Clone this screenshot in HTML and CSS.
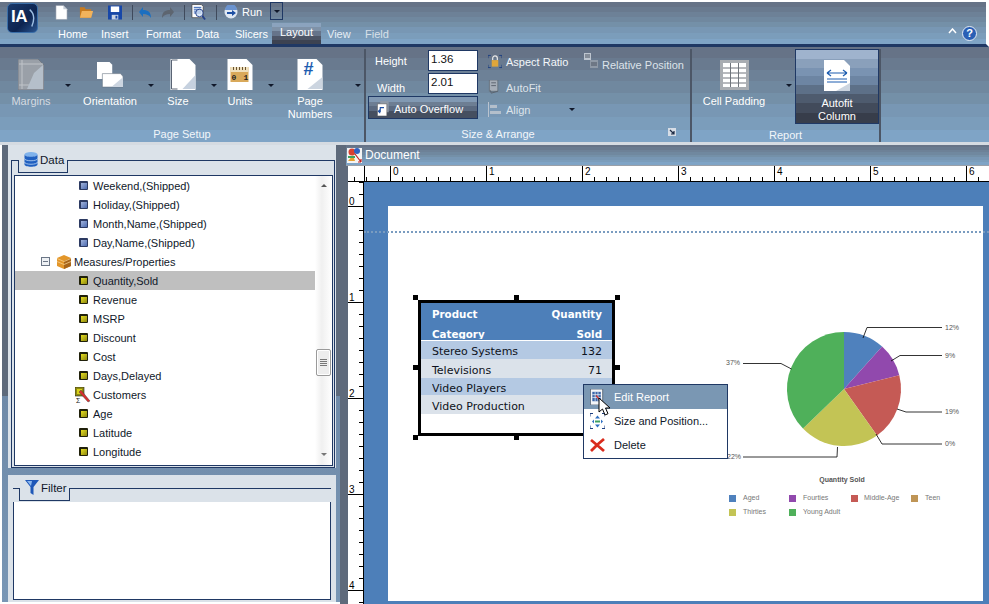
FILE: index.html
```html
<!DOCTYPE html>
<html lang="en">
<head>
    <meta charset="UTF-8">
    <title>InfoAssist</title>
    <link rel="stylesheet" href="styles.css">
</head>
<body>
    <header class="titlebar">
        <div class="logo">IA<svg class="logo-swoosh" viewBox="0 0 10 26"><path d="M1 1c6 5 8 12 3 24" fill="none" stroke="#9fc0e4" stroke-width="2"/></svg></div>
        <div class="titlebar-main">
            <div class="quick">
                <svg class="qi qi-new" viewBox="0 0 14 15"><path d="M1 0h8l4 4v11H1z" fill="#fff" stroke="#8d97a5" stroke-width=".6"/><path d="M9 0v4h4z" fill="#c4ccd6"/></svg>
                <svg class="qi qi-open" viewBox="0 0 16 14"><path d="M1 2h5l1 2h6v9H1z" fill="#c77a1e"/><path d="M3 6h12l-2 7H1z" fill="#f2b35c"/></svg>
                <svg class="qi qi-save" viewBox="0 0 15 15"><path d="M0 0h15v15H0z" fill="#1747a8"/><path d="M3 1h9v6H3z" fill="#fff"/><path d="M4 10h7v5H4z" fill="#c9d3e2"/><path d="M8 11h2v3H8z" fill="#1747a8"/></svg>
                <span class="qsep"></span>
                <svg class="qi qi-undo" viewBox="0 0 12 11"><path d="M4 0v3c5 0 8 2 8 8-2-3-4-4-8-4v3L0 5z" fill="#1c6fc0"/></svg>
                <svg class="qi qi-redo" viewBox="0 0 12 11"><path d="M8 0v3C3 3 0 5 0 11c2-3 4-4 8-4v3l4-5z" fill="#5d6570"/></svg>
                <span class="qsep"></span>
                <svg class="qi qi-preview" viewBox="0 0 16 17"><path d="M1 0h10l2 2v12H1z" fill="#fff" stroke="#333" stroke-width=".7"/><path d="M3 3h8M3 5h8M3 7h8M3 9h8" stroke="#2458b0"/><circle cx="9" cy="9" r="4" fill="#cfe0f5" fill-opacity=".7" stroke="#24408a"/><path d="M12 12l3 4" stroke="#24408a" stroke-width="2"/></svg>
                <span class="qsep"></span>
                <svg class="qi qi-run" viewBox="0 0 14 14"><circle cx="7" cy="7" r="6.500" fill="#dfe8f3"/><path d="M1 5a6 6 0 0 1 12 0z" fill="#6a93d0"/><path d="M3 7h5V5l4 3-4 3V9H3z" fill="#1d4fa3"/></svg>
                <span class="run-label">Run</span>
                <span class="run-drop"><i class="caret"></i></span>
            </div>
            <nav class="tabs">
                <span class="tab tab-home">Home</span>
                <span class="tab tab-insert">Insert</span>
                <span class="tab tab-format">Format</span>
                <span class="tab tab-data">Data</span>
                <span class="tab tab-slicers">Slicers</span>
                <span class="tab tab-layout">Layout</span>
                <span class="tab tab-view">View</span>
                <span class="tab tab-field">Field</span>
                <svg class="collapse" viewBox="0 0 9 6"><path d="M1 5l3.500-4L8 5" fill="none" stroke="#fff" stroke-width="1.500"/></svg>
                <span class="help">?</span>
            </nav>
        </div>
    </header>

    <section class="ribbon">
        <div class="group group-page">
            <div class="page-buttons">
                <div class="big">
                    <svg class="big-icon dim" viewBox="0 0 26 31"><path d="M0 0h20l6 6v25H0z" fill="#9aa0a8" stroke="#6f757d" stroke-width=".8"/><path d="M4 1v29M1 5h24M1 26h24" stroke="#c0c4c9"/><path d="M16 14l9-8v24H9z" fill="#b5bfca"/></svg>
                    <span class="lbl lbl-dim">Margins</span>
                </div>
                <i class="caret"></i>
                <div class="big">
                    <svg class="big-icon" viewBox="0 0 29 28"><path d="M0 0h14l3 3v16H0z" fill="#fff"/><path d="M6 13h20l3 3v12H6z" fill="#fff" stroke="#5e6a7a" stroke-width=".6"/><path d="M16 28l13-11v11z" fill="#ccd5e0"/></svg>
                    <span class="lbl">Orientation</span>
                </div>
                <i class="caret"></i>
                <div class="big big-size">
                    <svg class="big-icon" viewBox="0 0 25 31"><path d="M0 0h19l6 6v25H0z" fill="#fff"/><path d="M1 1v29h6M1 1h6" fill="none" stroke="#5a6474"/><path d="M12 30l13-14v14z" fill="#c6d1df"/></svg>
                    <span class="lbl">Size</span>
                </div>
                <i class="caret"></i>
                <div class="big">
                    <svg class="big-icon" viewBox="0 0 25 31"><path d="M0 0h19l6 6v25H0z" fill="#fff"/><path d="M3 8h18v15H3z" fill="#d9a95a"/><path d="M3 8h18v5H3z" fill="#efe0bd"/><path d="M6 8v3M9 8v3M12 8v3M15 8v3M18 8v3" stroke="#6a5330"/><text x="4" y="21" class="unit-num">0</text><text x="16" y="21" class="unit-num">1</text></svg>
                    <span class="lbl">Units</span>
                </div>
                <i class="caret"></i>
                <div class="big">
                    <svg class="big-icon" viewBox="0 0 25 31"><path d="M0 0h19l6 6v25H0z" fill="#fff"/><text x="6" y="16" class="hash">#</text><path d="M10 30l15-12v12z" fill="#ccd5e0"/></svg>
                    <span class="lbl">Page<br>Numbers</span>
                </div>
                <i class="caret caret-last"></i>
            </div>
            <div class="group-name">Page Setup</div>
        </div>

        <div class="group group-size">
            <div class="size-body">
                <div class="size-fields">
                    <label class="field-row">
                        <span class="field-name">Height</span>
                        <span class="field-box">1.36</span>
                    </label>
                    <label class="field-row">
                        <span class="field-name field-name-width">Width</span>
                        <span class="field-box">2.01</span>
                    </label>
                    <div class="overflow-btn">
                        <svg class="small-icon" viewBox="0 0 14 16"><path d="M3 0h9v12H3z" fill="#8e9aa9"/><path d="M0 3h10v13H0z" fill="#fff" stroke="#555" stroke-width=".6"/><path d="M7 7H3v4H1.500M3 13l-2-2 2-2" fill="none" stroke="#1d4fa3" stroke-width="1.200"/></svg>
                        Auto Overflow
                    </div>
                </div>
                <div class="size-tools">
                    <div class="tool tool-aspect"><svg class="small-icon" viewBox="0 0 15 15"><path d="M0 4V1h3M12 1h3v3M0 11v3h3M12 14h3v-3" fill="none" stroke="#1d3f80"/><path d="M4 6h7v7H4z" fill="#e0a63a"/><path d="M5 6V4a2.500 2.500 0 0 1 5 0v2" fill="none" stroke="#e8e8e8" stroke-width="1.300"/></svg>Aspect Ratio</div>
                    <div class="tool tool-dim tool-autofit"><svg class="small-icon" viewBox="0 0 14 16"><path d="M1 0h9v12H1z" fill="#a6aeb8" stroke="#59616c" stroke-width=".7"/><path d="M10 12L3 14l-1-3" fill="none" stroke="#59616c"/><path d="M3 3h5M3 6h5" stroke="#59616c"/></svg>AutoFit</div>
                    <div class="tool tool-dim tool-align"><svg class="small-icon" viewBox="0 0 14 15"><path d="M.5 0v15" stroke="#b9c3cf"/><path d="M2 3h7v3H2zM2 9h11v3H2z" fill="#b4bfcb"/></svg>Align<i class="caret caret-align"></i></div>
                </div>
                <div class="tool tool-dim tool-relative"><svg class="small-icon icon-relative" viewBox="0 0 14 15"><path d="M0 0h7v7H0z" fill="#bdc5cf"/><path d="M6 7h8v8H6z" fill="#8f99a6"/><path d="M1 2h5M1 4h5M7 10h6M7 12h6" stroke="#4c5562"/></svg>Relative Position</div>
            </div>
            <div class="group-name group-name-size">
                Size &amp; Arrange
                <svg class="launcher" viewBox="0 0 8 8"><path d="M0 0h8v8H0z" fill="#d6dde6"/><path d="M2 2l4 4M6 3v3H3" fill="none" stroke="#1d2b45" stroke-width="1.200"/></svg>
            </div>
        </div>

        <div class="group group-report">
            <div class="report-body">
                <div class="big big-padding">
                    <svg class="big-icon" viewBox="0 0 29 30"><path d="M0 0h29v30H0z" fill="#a9adb2"/><path d="M3 3h23v24H3z" fill="#fff"/><path d="M3 8h23M3 13h23M3 18h23M3 23h23" stroke="#70757c"/><path d="M10.500 3v24M18.500 3v24" stroke="#70757c"/></svg>
                    <span class="lbl">Cell Padding</span>
                </div>
                <i class="caret caret-padding"></i>
                <div class="autofit-btn">
                    <svg class="big-icon" viewBox="0 0 26 31"><path d="M0 0h20l6 6v25H0z" fill="#fff"/><path d="M3 13h20M3 13l4-3M3 13l4 3M23 13l-4-3M23 13l-4 3" fill="none" stroke="#1d5db0" stroke-width="1.200"/><path d="M3 19h20M3 22h20" stroke="#1d5db0"/><path d="M12 31l14-8v8z" fill="#ccd5e0"/></svg>
                    <span class="lbl">Autofit<br>Column</span>
                </div>
            </div>
            <div class="group-name group-name-report">Report</div>
        </div>
    </section>

    <main class="workspace">
        <aside class="sidebar">
            <section class="panel panel-data">
                <div class="panel-head">
                    <div class="panel-tab">
                        <svg class="tab-icon" viewBox="0 0 14 15"><ellipse cx="7" cy="2.500" rx="6.500" ry="2.500" fill="#7fb2ec"/><path d="M.5 2.500v10c0 3 13 3 13 0v-10c0 3-13 3-13 0z" fill="#1f5fc0"/><path d="M.5 6.500c0 3 13 3 13 0M.5 10c0 3 13 3 13 0" fill="none" stroke="#bcd5f2" stroke-width=".8"/></svg>
                        <span class="tab-text">Data</span>
                    </div>
                </div>
                <div class="tree-box">
                    <ul class="tree">
                        <li class="row"><i class="fld fld-dim"></i>Weekend,(Shipped)</li>
                        <li class="row"><i class="fld fld-dim"></i>Holiday,(Shipped)</li>
                        <li class="row"><i class="fld fld-dim"></i>Month,Name,(Shipped)</li>
                        <li class="row"><i class="fld fld-dim"></i>Day,Name,(Shipped)</li>
                        <li class="row row-folder">
                            <span class="minus"></span>
                            <svg class="cube" viewBox="0 0 14 14"><path d="M7 0l7 3v8l-7 3-7-3V3z" fill="#e3962a"/><path d="M7 6l7-3v8l-7 3z" fill="#a8651a"/><path d="M0 6.500l7 3 7-3M0 3.500l7 3 7-3" fill="none" stroke="#f6cf8b" stroke-width=".8"/></svg>
                            Measures/Properties
                        </li>
                        <li class="row row-selected"><i class="fld"></i>Quantity,Sold</li>
                        <li class="row"><i class="fld"></i>Revenue</li>
                        <li class="row"><i class="fld"></i>MSRP</li>
                        <li class="row"><i class="fld"></i>Discount</li>
                        <li class="row"><i class="fld"></i>Cost</li>
                        <li class="row"><i class="fld"></i>Days,Delayed</li>
                        <li class="row row-calc">
                            <svg class="calc-icon" viewBox="0 0 16 16"><path d="M0 0h9v9H0z" fill="#8f8a10" stroke="#222" stroke-width=".6"/><path d="M2 2h5v5H2z" fill="#d8d21a"/><path d="M6 3l9 11-2 1L4 5z" fill="#d83030" stroke="#333" stroke-width=".4"/><text x="1" y="15.500" class="sigma">Σ</text></svg>
                            Customers
                        </li>
                        <li class="row"><i class="fld"></i>Age</li>
                        <li class="row"><i class="fld"></i>Latitude</li>
                        <li class="row"><i class="fld"></i>Longitude</li>
                    </ul>
                    <div class="scrollbar">
                        <i class="arrow-up"></i>
                        <span class="thumb"></span>
                        <i class="arrow-down"></i>
                    </div>
                </div>
            </section>
            <section class="panel panel-filter">
                <div class="panel-head panel-head-filter">
                    <div class="panel-tab panel-tab-filter">
                        <svg class="tab-icon tab-icon-filter" viewBox="0 0 14 15"><path d="M0 0h14L8.500 7v8l-3-2V7z" fill="#1f58b8"/><path d="M2 1h5L6 6z" fill="#8db8ee"/></svg>
                        <span class="tab-text">Filter</span>
                    </div>
                </div>
                <div class="filter-box"></div>
            </section>
        </aside>

        <section class="doc">
            <div class="doc-title">
                <svg class="doc-icon" viewBox="0 0 15 15"><path d="M0 0h15v15H0z" fill="#f4f4f4"/><circle cx="5" cy="4" r="3.500" fill="#d84030"/><circle cx="10" cy="3" r="3" fill="#3060c0"/><path d="M1 13l5-6 2 6z" fill="#e8a030"/><path d="M1 8h7v2H1z" fill="#40a060"/><path d="M8 6l6 8M14 14v-3M14 14h-3" fill="none" stroke="#c02020" stroke-width="1.200"/></svg>
                Document
            </div>
            <div class="ruler-h">
                <span class="ruler-lead"></span>
                <span class="rh">0</span><span class="rh">1</span><span class="rh">2</span><span class="rh">3</span><span class="rh">4</span><span class="rh">5</span><span class="rh">6</span>
            </div>
            <div class="doc-body">
                <div class="ruler-v">
                    <span class="rv">0</span><span class="rv">1</span><span class="rv">2</span><span class="rv">3</span><span class="rv">4</span>
                </div>
                <div class="canvas">
                    <div class="page">
                        <div class="guide"></div>
                        <div class="report">
                            <table class="report-table">
                                <tr class="head head-1"><td>Product</td><td class="num">Quantity</td></tr>
                                <tr class="head head-2"><td><span class="clip">Category</span></td><td class="num"><span class="clip">Sold</span></td></tr>
                                <tr class="r1"><td>Stereo Systems</td><td class="num">132</td></tr>
                                <tr class="r2"><td>Televisions</td><td class="num">71</td></tr>
                                <tr class="r1"><td><span class="clip">Video Players</span></td><td class="num"></td></tr>
                                <tr class="r2"><td>Video Production</td><td class="num"></td></tr>
                            </table>
                        </div>
                        <i class="handle h-tl"></i><i class="handle h-tc"></i><i class="handle h-tr"></i>
                        <i class="handle h-ml"></i><i class="handle h-mr"></i>
                        <i class="handle h-bl"></i><i class="handle h-bc"></i><i class="handle h-br"></i>

                        <svg class="chart" viewBox="710 310 250 215">
                            <path d="M844 389V332A57 57 0 0 1 882.100 346.600z" fill="#4f81bd"/>
                            <path d="M844 389L882.100 346.600A57 57 0 0 1 899.300 375.200z" fill="#9149ad"/>
                            <path d="M844 389L899.300 375.200A57 57 0 0 1 877 435.500z" fill="#c55a55"/>
                            <path d="M844 389L877 435.500A57 57 0 0 1 803 428.600z" fill="#c3c455"/>
                            <path d="M844 389L803 428.600A57 57 0 0 1 844 332z" fill="#4fb05a"/>
                            <g class="leaders">
                                <path d="M863 338L867 327.500H942"/>
                                <path d="M891 361L900 355.500H942"/>
                                <path d="M897 409L906 412H942"/>
                                <path d="M876 434L882 444H942"/>
                                <path d="M837.500 447L837 457H743"/>
                                <path d="M791.500 369L781 363.500H743"/>
                            </g>
                            <g class="pct">
                                <text x="945" y="329.500">12%</text>
                                <text x="945" y="357.500">9%</text>
                                <text x="945" y="414">19%</text>
                                <text x="945" y="445.500">0%</text>
                                <text x="727" y="459">22%</text>
                                <text x="726" y="365">37%</text>
                            </g>
                            <text x="842" y="482" class="chart-title">Quantity Sold</text>
                            <g class="legend">
                                <rect x="729" y="495" width="7" height="7" fill="#4f81bd"/><text x="743" y="500">Aged</text>
                                <rect x="789" y="495" width="7" height="7" fill="#9149ad"/><text x="803" y="500">Fourties</text>
                                <rect x="851" y="495" width="7" height="7" fill="#c55a55"/><text x="864" y="500">Middle-Age</text>
                                <rect x="911" y="495" width="7" height="7" fill="#bf9556"/><text x="925" y="500">Teen</text>
                                <rect x="729" y="509" width="7" height="7" fill="#c3c455"/><text x="743" y="514">Thirties</text>
                                <rect x="789" y="509" width="7" height="7" fill="#4fb05a"/><text x="803" y="514">Young Adult</text>
                            </g>
                        </svg>

                        <div class="menu">
                            <div class="menu-item menu-item-on">
                                <svg class="menu-icon" viewBox="0 0 15 17"><path d="M0 0h13v17H0z" fill="#f4f6f9" stroke="#4a5565" stroke-width=".8"/><path d="M2 3h9v10H2z" fill="#3a66a8"/><path d="M2 6h9M2 9h9M5 3v10M8 3v10" stroke="#fff" stroke-width=".7"/><path d="M6 7l7 8" stroke="#d03030" stroke-width="1.500"/></svg>
                                Edit Report
                            </div>
                            <div class="menu-item">
                                <svg class="menu-icon" viewBox="0 0 15 15"><path d="M0 3V0h3M12 0h3v3M0 12v3h3M12 15h3v-3" fill="none" stroke="#1d3f80"/><path d="M5 7h5v2H5z" fill="#40a060"/><path d="M7.500 2l2.500 3H5zM7.500 14L5 11h5z" fill="#2f6fc0"/><path d="M2 8l2-2v4zM13 8l-2-2v4z" fill="#2f6fc0"/></svg>
                                Size and Position...
                            </div>
                            <div class="menu-item">
                                <svg class="menu-icon" viewBox="0 0 15 14"><path d="M1 2l6 5-6 6M14 1L7 7l7 6" fill="none" stroke="#d92b1c" stroke-width="2.800"/></svg>
                                Delete
                            </div>
                        </div>
                        <svg class="cursor" viewBox="0 0 13 20"><path d="M1 1v14l3.500-3 2.500 6 3-1.300-2.500-5.700H12z" fill="#fff" stroke="#000"/></svg>
                    </div>
                </div>
            </div>
        </section>
    </main>
</body>
</html>
```

FILE: styles.css
```css
:root {
    --bands: linear-gradient(#667387 0 12%, #697a8f 12% 24%, #6d8197 24% 36%, #70889f 36% 48%, #7490a8 48% 60%, #7897b4 60% 74%, #7b9dbb 74% 87%, #7fa4c6 87% 100%);
    --navy: #1f3864;
}
* {
    box-sizing: border-box;
}
html, body {
    height: 100%;
}
body {
    margin: 0;
    width: 989px;
    height: 604px;
    overflow: hidden;
    display: flex;
    flex-direction: column;
    background-color: #fff;
    font-family: "Liberation Sans", Arial, sans-serif;
    font-size: 11px;
    color: #10182a;
}
ul {
    list-style: none;
    margin: 0;
    padding: 0;
}
i {
    display: block;
}
svg {
    display: block;
    flex: none;
}

/* title bar */
.titlebar {
    height: 45px;
    flex: none;
    display: flex;
    margin-top: 2px;
    background: var(--bands);
    border-bottom: 3px solid var(--navy);
    border-right: 3px solid #fff;
    color: #fff;
}
.logo {
    width: 31px;
    height: 30px;
    margin: 1px 0 0 7px;
    padding: 2px 0 0 3px;
    border-radius: 5px;
    border: 1px solid #3a6ea8;
    background: linear-gradient(135deg, #1b3a6b, #0d2450 60%, #2a5590);
    font-size: 17px;
    font-weight: bold;
    line-height: 21px;
    position: relative;
    letter-spacing: -.5px;
}
.logo-swoosh {
    position: absolute;
    right: 1px;
    top: 2px;
    width: 7px;
    height: 24px;
}
.titlebar-main {
    flex: 1;
    display: flex;
    flex-direction: column;
}
.quick {
    height: 20px;
    display: flex;
    align-items: center;
    padding-left: 17px;
}
.qi-new { width: 13px; height: 15px; }
.qi-open { width: 15px; height: 14px; margin-left: 11px; }
.qi-save { width: 14px; height: 15px; margin-left: 14px; }
.qsep {
    width: 1px;
    height: 15px;
    margin: 0 6px 0 10px;
    background-color: #3f4a5c;
}
.qi-undo { width: 12px; height: 11px; }
.qi-redo { width: 12px; height: 11px; margin-left: 11px; }
.qi-preview { width: 15px; height: 17px; }
.qi-run { width: 14px; height: 14px; margin-left: 1px; }
.run-label {
    margin-left: 4px;
    font-size: 11px;
}
.run-drop {
    width: 13px;
    height: 18px;
    margin-left: 8px;
    margin-top: -2px;
    border: 1px solid var(--navy);
    display: flex;
    align-items: center;
    justify-content: center;
}
.caret {
    width: 0;
    height: 0;
    border: 3px solid transparent;
    border-top: 3px solid #10182a;
    border-bottom: 0;
}
.tabs {
    flex: 1;
    display: flex;
    align-items: flex-end;
    padding-left: 20px;
}
.tab {
    height: 21px;
    line-height: 23px;
    font-size: 11px;
    flex: none;
}
.tab-home { width: 43px; }
.tab-insert { width: 45px; }
.tab-format { width: 50px; }
.tab-data { width: 39px; }
.tab-slicers { width: 37px; }
.tab-layout {
    width: 49px;
    text-align: center;
    line-height: 18px;
    background: linear-gradient(#8ba3be 0 20%, #7f92a8 20% 40%, #66748a 40% 60%, #4d5566 60% 80%, #3c4251 80%);
}
.tab-view { width: 44px; padding-left: 6px; color: #e6edf4; }
.tab-field { color: #d8e0e8; }
.collapse {
    width: 9px;
    height: 6px;
    margin: 0 0 10px auto;
}
.help {
    width: 15px;
    height: 15px;
    margin: 0 9px 3px 5px;
    border-radius: 50%;
    border: 1px solid #e6edf6;
    background-color: #2a5fb5;
    font-size: 11px;
    font-weight: bold;
    line-height: 13px;
    text-align: center;
}

/* ribbon */
.ribbon {
    height: 98px;
    flex: none;
    display: flex;
    background: var(--bands);
    border-bottom: 3px solid #d5dbe2;
    color: #fff;
}
.group {
    display: flex;
    flex-direction: column;
    border-right: 2px solid #4c5666;
    margin-top: 2px;
    height: 93px;
}
.group-page { width: 366px; }
.group-size { width: 326px; }
.group-report { width: 189px; }
.group-name {
    height: 14px;
    margin-top: auto;
    margin-bottom: 1px;
    text-align: center;
    line-height: 14px;
    font-size: 11px;
    color: #f2f6fa;
}
.page-buttons {
    display: grid;
    grid-template-columns: 50px 24px 60px 22px 42px 20px 32px 30px 48px 30px;
    padding: 10px 0 0 6px;
}
.big {
    display: flex;
    flex-direction: column;
    align-items: center;
    text-align: center;
}
.big-icon {
    width: 26px;
    height: 31px;
}
.big-size .lbl {
    margin-right: 10px;
}
.lbl {
    margin-top: 5px;
    font-size: 11px;
    line-height: 13px;
}
.lbl-dim {
    color: #d5dbe2;
}
.page-buttons > .caret {
    justify-self: center;
    margin-top: 25px;
}
.page-buttons > .caret-last {
    justify-self: end;
    margin-right: 3px;
}
.size-body {
    display: flex;
    padding-left: 2px;
}
.size-fields {
    width: 110px;
    flex: none;
}
.field-row {
    display: flex;
    height: 23px;
    align-items: center;
    font-size: 11px;
}
.field-name {
    width: 60px;
    padding-left: 7px;
}
.field-name-width {
    padding: 9px 0 0 9px;
}
.field-box {
    width: 50px;
    height: 21px;
    border: 1px solid var(--navy);
    background-color: #fff;
    color: #111;
    padding-left: 2px;
    font-size: 11.500px;
    line-height: 17px;
}
.overflow-btn {
    height: 23px;
    margin-top: 1px;
    display: flex;
    align-items: center;
    gap: 3px;
    padding: 2px 0 0 8px;
    border: 1px solid var(--navy);
    background: linear-gradient(#8199b3 0 22%, #6d7e93 22% 44%, #5b6a80 44% 66%, #454f60 66%);
    color: #fff;
    font-size: 11px;
}
.small-icon {
    width: 14px;
    height: 15px;
}
.size-tools {
    width: 96px;
    margin-left: 10px;
    flex: none;
}
.tool {
    height: 23px;
    display: flex;
    align-items: center;
    gap: 4px;
    font-size: 11px;
    color: #f4f7fa;
}
.tool-dim {
    color: #dde3ea;
}
.tool-aspect {
    margin-top: 1px;
}
.tool-autofit {
    margin-top: 3px;
}
.tool-align {
    margin-top: -1px;
}
.caret-align {
    margin-left: 35px;
}
.tool-relative {
    margin-top: 4px;
}
.icon-relative {
    margin-top: -8px;
}
.group-name-size {
    display: flex;
    align-items: center;
    justify-content: center;
    position: relative;
    margin-right: 60px;
}
.launcher {
    position: absolute;
    right: -46px;
    top: 1px;
    width: 8px;
    height: 8px;
}
.report-body {
    display: flex;
}
.big-padding {
    width: 74px;
    margin: 11px 0 0 5px;
}
.big-padding .big-icon {
    width: 29px;
    height: 30px;
}
.caret-padding {
    margin: 35px 0 0 15px;
}
.autofit-btn {
    width: 84px;
    height: 75px;
    margin-left: 3px;
    padding-top: 10px;
    display: flex;
    flex-direction: column;
    align-items: center;
    text-align: center;
    border: 1px solid var(--navy);
    background: linear-gradient(#9fb3cd 0 12%, #8aa0bb 12% 24%, #7a93b2 24% 36%, #6d85a3 36% 48%, #5d7088 48% 60%, #4e5b6e 60% 72%, #424b5b 72% 86%, #373d4a 86%);
}
.autofit-btn .lbl {
    margin-top: 6px;
}
.group-name-report {
    margin-top: 0;
    position: relative;
    top: 4px;
}

/* left side */
.workspace {
    flex: 1;
    min-height: 0;
    display: flex;
}
.sidebar {
    width: 338px;
    flex: none;
    display: flex;
    flex-direction: column;
    padding: 0 4px 0 6px;
    margin-left: 2px;
    background: linear-gradient(#5e6a7b 0 55%, #6f8aa8 55%, #7896b5);
    height: 457px;
}
.panel {
    background-color: #dbe2e9;
    display: flex;
    flex-direction: column;
    position: relative;
}
.panel-data {
    height: 323px;
    flex: none;
}
/* outer frame around the tree */
.panel-data::after {
    content: "";
    position: absolute;
    left: 3px;
    right: 1px;
    top: 15px;
    bottom: 0;
    border: 1px solid var(--navy);
    border-top: 0;
    pointer-events: none;
}
.panel-filter {
    flex: 1;
    margin-top: 7px;
}
.panel-head {
    height: 30px;
    flex: none;
    padding: 15px 0 0 4px;
    position: relative;
}
.panel-head::before {
    content: "";
    position: absolute;
    left: 3px;
    right: 1px;
    top: 15px;
    height: 1px;
    background-color: var(--navy);
}
.panel-tab {
    width: 50px;
    height: 13px;
    margin-left: 6px;
    position: relative;
    background-color: #dbe2e9;
    border: 1px solid var(--navy);
    border-top: 0;
    display: flex;
    align-items: flex-start;
    gap: 2px;
    font-size: 11.500px;
    padding-left: 5px;
}
.tab-text {
    margin-top: -7px;
    line-height: 14px;
}
.tab-icon {
    width: 14px;
    height: 15px;
    margin-top: -8px;
}
.tree-box {
    height: 291px;
    margin: 0 3px 0 6px;
    display: flex;
    border: 1px solid var(--navy);
    background-color: #fff;
    position: relative;
}
.tree {
    width: 300px;
    flex: none;
}
.row {
    height: 19px;
    display: flex;
    align-items: center;
    padding-left: 64px;
    font-size: 11px;
    gap: 5px;
    color: #10182a;
    white-space: nowrap;
}
.row-selected {
    background-color: #bfbfbf;
}
.row-folder {
    padding-left: 26px;
    gap: 0;
}
.row-calc {
    padding-left: 60px;
    gap: 2px;
}
.fld {
    width: 9px;
    height: 9px;
    border: 1px solid #20200a;
    border-top-width: 2px;
    border-left-width: 2px;
    border-radius: 1px;
    background: linear-gradient(135deg, #e6df20, #8d8610);
    flex: none;
}
.fld-dim {
    border-color: #2c3a62;
    background: linear-gradient(135deg, #a2b4dc, #4d6bb0);
}
.minus {
    width: 9px;
    height: 9px;
    border: 1px solid #6b7686;
    background: linear-gradient(#6b7686, #6b7686) center / 5px 1px no-repeat, #eef1f4;
    margin-right: 7px;
}
.cube {
    width: 14px;
    height: 14px;
    margin-right: 3px;
}
.calc-icon {
    width: 16px;
    height: 16px;
}
.sigma {
    font-size: 7px;
    fill: #111;
}
.scrollbar {
    flex: 1;
    padding-top: 8px;
    display: flex;
    flex-direction: column;
    align-items: center;
    background: linear-gradient(90deg, #fff, #f0f0f0 40%, #fff);
}
.arrow-up {
    border: 3px solid transparent;
    border-top: 0;
    border-bottom: 3px solid #555;
}
.arrow-down {
    margin-top: 77px;
    border: 3px solid transparent;
    border-bottom: 0;
    border-top: 3px solid #777;
}
.thumb {
    width: 15px;
    height: 27px;
    margin-top: 162px;
    border: 1px solid #9a9a9a;
    border-radius: 2px;
    background: repeating-linear-gradient(#777 0 1px, transparent 1px 2px) center / 7px 7px no-repeat, #ededed;
    box-shadow: inset 0 0 0 1px #fff;
}
.panel-head-filter {
    height: 27px;
    padding-top: 13px;
}
.panel-head-filter::before {
    top: 13px;
    left: 5px;
    right: 5px;
}
.panel-tab-filter {
    width: 51px;
    margin-left: 7px;
}
.filter-box {
    flex: 1;
    margin: 0 5px 2px;
    background-color: #fff;
    border: 1px solid var(--navy);
    border-top: 0;
}

/* document */
.doc {
    flex: 1;
    min-width: 0;
    display: flex;
    flex-direction: column;
    background-color: #5e6a7b;
    padding-left: 6px;
}
.doc-title {
    height: 21px;
    flex: none;
    display: flex;
    align-items: center;
    gap: 3px;
    background: var(--bands);
    color: #fff;
    font-size: 12px;
    padding-left: 1px;
    border-bottom: 1px solid #9aa0a8;
}
.doc-icon {
    width: 15px;
    height: 15px;
}
.ruler-h {
    height: 16px;
    flex: none;
    display: flex;
    overflow: hidden;
    margin-left: 2px;
    padding-left: 16px;
    border-bottom: 1px solid #000;
    background: linear-gradient(90deg, #000 1px, transparent 1px) 6px 100% / 12px 4px repeat-x, #fff;
}
.ruler-lead {
    width: 26px;
    border-left: 1px solid #000;
    flex: none;
}
.rh {
    width: 96px;
    flex: none;
    border-left: 1px solid #000;
    padding-left: 2px;
    font-size: 10px;
    line-height: 12px;
    color: #000;
}
.doc-body {
    flex: 1;
    min-height: 0;
    display: flex;
    margin-left: 2px;
}
.ruler-v {
    width: 16px;
    flex: none;
    overflow: hidden;
    border-right: 1px solid #000;
    background: linear-gradient(#000 1px, transparent 1px) 100% 0 / 4px 12px repeat-y, #fff;
}
.rv {
    height: 96px;
    display: flex;
    align-items: flex-end;
    border-bottom: 1px solid #000;
    font-size: 10px;
    line-height: 8px;
    color: #000;
    padding-left: 1px;
}
.rv:first-child {
    height: 25px;
}
.canvas {
    flex: 1;
    min-width: 0;
    display: flex;
    padding: 24px 6px 3px 24px;
    background-color: #4d7fb9;
}
.page {
    flex: 1;
    background-color: #fff;
    position: relative;
}
.guide {
    position: absolute;
    left: -24px;
    right: -6px;
    top: 25px;
    border-top: 2px dotted #7a9cc0;
}
.report {
    position: absolute;
    left: 30px;
    top: 94px;
    width: 197px;
    height: 136px;
    border: 3px solid #000;
    background-color: #fff;
}
.report-table {
    width: 100%;
    border-collapse: collapse;
    font-family: "DejaVu Sans", Verdana, sans-serif;
    font-size: 11px;
    color: #0e1220;
}
.report-table td {
    padding: 4px 10px 0 11px;
    line-height: 14px;
    white-space: nowrap;
}
.report-table .num {
    text-align: right;
}
.report-table .r2 td {
    padding-top: 5px;
}
.clip {
    display: block;
    height: 13px;
    overflow: hidden;
}
.head {
    background-color: #4d7fb9;
    color: #fff;
}
.head .clip {
    height: 12px;
}
.report-table .head td {
    font-size: 10.300px;
    font-weight: bold;
}
.report-table .head-1 td {
    padding-top: 0;
    height: 22px;
}
.report-table .head-2 td {
    padding-top: 1px;
    height: 15px;
    border-bottom: 1px solid #fff;
}
.r1 {
    background-color: #b4c9e3;
}
.r2 {
    background-color: #dbe2ea;
}
.handle {
    position: absolute;
    width: 5px;
    height: 5px;
    background-color: #000;
}
.h-tl { left: 25px; top: 89px; }
.h-tc { left: 126px; top: 89px; }
.h-tr { left: 227px; top: 89px; }
.h-ml { left: 25px; top: 159px; }
.h-mr { left: 227px; top: 159px; }
.h-bl { left: 25px; top: 229px; }
.h-bc { left: 126px; top: 229px; }
.h-br { left: 227px; top: 229px; }
.chart {
    position: absolute;
    left: 322px;
    top: 104px;
    width: 250px;
    height: 215px;
}
.leaders path {
    fill: none;
    stroke: #000;
    stroke-width: .8;
}
.pct text,
.legend text,
.chart-title {
    font-family: "Liberation Sans", Arial, sans-serif;
    font-size: 7px;
    fill: #555;
}
.legend text {
    fill: #777;
}
.chart-title {
    font-weight: bold;
    text-anchor: middle;
}
.menu {
    position: absolute;
    left: 195px;
    top: 178px;
    width: 145px;
    height: 75px;
    background-color: #fff;
    border: 1px solid var(--navy);
}
.menu-item {
    height: 24px;
    display: flex;
    align-items: center;
    gap: 9px;
    padding-left: 6px;
    font-size: 11px;
    color: #10182a;
}
.menu-item-on {
    background-color: #7a97b3;
    color: #fff;
}
.menu-icon {
    width: 15px;
    height: 16px;
}
.cursor {
    position: absolute;
    left: 210px;
    top: 191px;
    width: 13px;
    height: 20px;
}
.unit-num {
    font-size: 8px;
    font-weight: bold;
    fill: #222;
    font-family: "Liberation Mono", monospace;
}
.hash {
    font-size: 18px;
    font-weight: bold;
    fill: #1d5db0;
    font-family: "Liberation Sans", Arial, sans-serif;
}
```
